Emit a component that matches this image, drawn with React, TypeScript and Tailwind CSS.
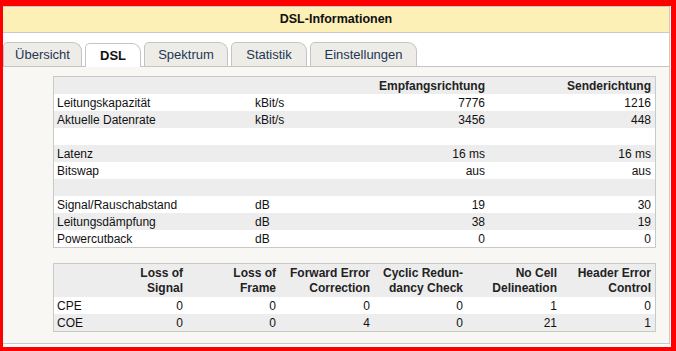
const tabs = [
  { label: "Übersicht", w: "w-[79px]", active: false },
  { label: "DSL", w: "w-[56px]", active: true },
  { label: "Spektrum", w: "w-[84px]", active: false },
  { label: "Statistik", w: "w-[76px]", active: false },
  { label: "Einstellungen", w: "w-[107px]", active: false },
];

type Row = { label: string; unit: string; rx: string; tx: string };

const rows: Row[] = [
  { label: "Leitungskapazität", unit: "kBit/s", rx: "7776", tx: "1216" },
  { label: "Aktuelle Datenrate", unit: "kBit/s", rx: "3456", tx: "448" },
  { label: "", unit: "", rx: "", tx: "" },
  { label: "Latenz", unit: "", rx: "16 ms", tx: "16 ms" },
  { label: "Bitswap", unit: "", rx: "aus", tx: "aus" },
  { label: "", unit: "", rx: "", tx: "" },
  { label: "Signal/Rauschabstand", unit: "dB", rx: "19", tx: "30" },
  { label: "Leitungsdämpfung", unit: "dB", rx: "38", tx: "19" },
  { label: "Powercutback", unit: "dB", rx: "0", tx: "0" },
];

const errHead = [
  ["Loss of", "Signal"],
  ["Loss of", "Frame"],
  ["Forward Error", "Correction"],
  ["Cyclic Redun-", "dancy Check"],
  ["No Cell", "Delineation"],
  ["Header Error", "Control"],
];

const errRows = [
  { label: "CPE", vals: ["0", "0", "0", "0", "1", "0"] },
  { label: "COE", vals: ["0", "0", "4", "0", "21", "1"] },
];

const grid1 = "grid grid-cols-[197px_100px_138px_166px]";
const grid2 = "grid grid-cols-[39px_94px_93px_94px_93px_94px_94px]";

export default function App() {
  return (
    <div
      className="w-[676px] h-[351px] bg-[#ff0000] pt-[6px] pl-[3px] pr-[5px] pb-[4px]"
      style={{ fontFamily: '"Liberation Sans", Arial, sans-serif' }}
    >
      <div className="h-full bg-white pr-[1px] pb-[3px]">
        <div className="h-full flex flex-col bg-[#f8f7f3] border-t border-r border-b border-[#c9c9c9]">
          {/* title bar */}
          <div className="h-[26px] shrink-0 bg-[#fcf0b6] border-b border-[#c9c9c9] flex items-center justify-center text-[12.5px] font-bold text-[#111]">
            DSL-Informationen
          </div>

          {/* tabs */}
          <div className="h-[34px] shrink-0 bg-white border-b border-[#c4c4c4] flex items-end gap-[3px]">
            {tabs.map((t) => (
              <div
                key={t.label}
                className={
                  t.active
                    ? `${t.w} h-[24px] -mb-px bg-white border border-b-0 border-[#c4c4c4] rounded-tl-[5px] rounded-tr-[9px] flex items-center justify-center text-[13px] font-bold text-[#111]`
                    : `${t.w} h-[24px] bg-[#edece6] border border-b-0 border-[#c4c4c4] rounded-tl-[5px] rounded-tr-[9px] flex items-center justify-center text-[13px] text-[#1e3656]`
                }
              >
                {t.label}
              </div>
            ))}
          </div>

          {/* content */}
          <div className="pt-[9px] pl-[50px] flex flex-col gap-[15px] text-[12px] text-[#111]">
            <div className="w-[603px] bg-white border border-[#c9c9c9]">
              <div className={`${grid1} h-[17px] bg-[#ededed] items-center font-bold text-[#222]`}>
                <div />
                <div />
                <div className="text-right px-[4px]">Empfangsrichtung</div>
                <div className="text-right px-[4px]">Senderichtung</div>
              </div>
              {rows.map((r, i) => (
                <div
                  key={i}
                  className={`${grid1} h-[17px] items-center ${i % 2 === 1 ? "bg-[#ededed]" : "bg-white"}`}
                >
                  <div className="px-[3px]">{r.label}</div>
                  <div className="px-[4px]">{r.unit}</div>
                  <div className="text-right px-[4px]">{r.rx}</div>
                  <div className="text-right px-[4px]">{r.tx}</div>
                </div>
              ))}
            </div>

            <div className="w-[603px] bg-white border border-[#c9c9c9]">
              <div className={`${grid2} h-[33px] bg-[#ededed] items-center font-bold text-[#222] leading-[15px]`}>
                <div />
                {errHead.map((h) => (
                  <div key={h[0] + h[1]} className="text-right px-[4px] whitespace-nowrap">
                    {h[0]}
                    <br />
                    {h[1]}
                  </div>
                ))}
              </div>
              {errRows.map((r, i) => (
                <div
                  key={r.label}
                  className={`${grid2} h-[17px] items-center ${i % 2 === 1 ? "bg-[#ededed]" : "bg-white"}`}
                >
                  <div className="px-[3px]">{r.label}</div>
                  {r.vals.map((v, j) => (
                    <div key={j} className="text-right px-[4px]">
                      {v}
                    </div>
                  ))}
                </div>
              ))}
            </div>
          </div>
        </div>
      </div>
    </div>
  );
}
